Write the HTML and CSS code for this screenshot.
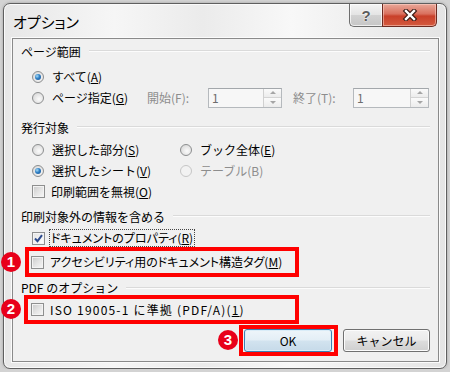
FILE: index.html
```html
<!DOCTYPE html>
<html lang="ja">
<head>
    <meta charset="UTF-8">
    <meta name="viewport" content="width=device-width, initial-scale=1.0">
    <title>オプション</title>
    <link rel="stylesheet" href="styles.css">
</head>
<body>
    <div class="window">
        <div class="titlebar">
            <span class="title">オプション</span>
            <div class="caption-buttons">
                <div class="cap-btn help-btn">?</div>
                <div class="cap-btn close-btn">
                    <svg width="16" height="12" viewBox="0 0 16 12">
                        <path d="M4 2 L12 10 M12 2 L4 10" stroke="#3b1c16" stroke-width="4.6" stroke-linecap="square"/>
                        <path d="M4 2 L12 10 M12 2 L4 10" stroke="#ffffff" stroke-width="2.4" stroke-linecap="square"/>
                    </svg>
                </div>
            </div>
        </div>

        <div class="content">
            <!-- ページ範囲 -->
            <div class="group-head head-page"><span>ページ範囲</span></div>
            <div class="row row-first">
                <span class="radio checked"></span>
                <span class="label">すべて(<u>A</u>)</span>
            </div>
            <div class="row">
                <div class="col-page">
                    <span class="radio"></span>
                    <span class="label">ページ指定(<u>G</u>)</span>
                </div>
                <span class="field-label start-label">開始(F):</span>
                <div class="spin spin-start">
                    <span class="spin-value">1</span>
                    <div class="spin-btns">
                        <div class="spin-up"></div>
                        <div class="spin-down"></div>
                    </div>
                </div>
                <span class="field-label end-label">終了(T):</span>
                <div class="spin spin-end">
                    <span class="spin-value">1</span>
                    <div class="spin-btns">
                        <div class="spin-up"></div>
                        <div class="spin-down"></div>
                    </div>
                </div>
            </div>

            <!-- 発行対象 -->
            <div class="group-head head-target"><span>発行対象</span></div>
            <div class="row row-first-tight">
                <div class="col-left">
                    <span class="radio"></span>
                    <span class="label">選択した部分(<u>S</u>)</span>
                </div>
                <span class="radio"></span>
                <span class="label">ブック全体(<u>E</u>)</span>
            </div>
            <div class="row">
                <div class="col-left">
                    <span class="radio checked"></span>
                    <span class="label">選択したシート(<u>V</u>)</span>
                </div>
                <span class="radio disabled"></span>
                <span class="label dim">テーブル(B)</span>
            </div>
            <div class="row">
                <span class="check"></span>
                <span class="label check-label">印刷範囲を無視(<u>O</u>)</span>
            </div>

            <!-- 印刷対象外の情報を含める -->
            <div class="group-head head-info"><span>印刷対象外の情報を含める</span></div>
            <div class="row row-props">
                <span class="check checked">
                    <svg width="11" height="11" viewBox="0 0 11 11">
                        <path d="M2 5.5 L4.5 8.2 L9 2.2" fill="none" stroke="#2c4a8c" stroke-width="2"/>
                    </svg>
                </span>
                <span class="label check-label kana focus">ドキュメントのプロパティ(<u>R</u>)</span>
            </div>
            <div class="highlight hl-tags">
                <span class="badge badge-1">1</span>
                <span class="check"></span>
                <span class="label check-label kana">アクセシビリティ用のドキュメント構造タグ(<u>M</u>)</span>
            </div>

            <!-- PDF のオプション -->
            <div class="group-head head-pdf"><span>PDF のオプション</span></div>
            <div class="highlight hl-iso">
                <span class="badge badge-2">2</span>
                <span class="check"></span>
                <span class="label check-label iso">ISO 19005-1 に準拠 (PDF/A)(<u>1</u>)</span>
            </div>

            <div class="button-row">
                <div class="highlight hl-ok">
                    <span class="badge badge-3">3</span>
                    <div class="btn btn-default">OK</div>
                </div>
                <div class="btn btn-cancel">キャンセル</div>
            </div>
        </div>
    </div>
</body>
</html>
```

FILE: styles.css
```css
* {
    margin: 0;
    padding: 0;
    box-sizing: border-box;
}

body {
    background: #d3d3d3;
    font-family: "Noto Sans CJK JP", "Noto Sans", sans-serif;
    font-size: 12px;
    color: #000;
}

u {
    text-decoration: underline;
    text-underline-offset: 1px;
}

/* window frame */
.window {
    margin: 3px 0 0 3px;
    width: 444px;
    border: 1px solid #5f5f5f;
    border-radius: 7px;
    padding: 0 7px 6px 8px;
    background: linear-gradient(90deg, #e7e7e7 0%, #f6f6f6 25%, #ebebeb 45%, #f8f8f8 65%, #ececec 85%, #e4e4e4 100%);
    box-shadow: inset 0 0 0 1px #fafafa, 0 0 3px rgba(0, 0, 0, 0.25);
}

.titlebar {
    height: 34px;
    display: flex;
    justify-content: space-between;
    align-items: flex-start;
    margin: 0 -7px 0 -8px;
    padding: 0 9px 0 9px;
}

.title {
    margin-top: 8px;
    line-height: 20px;
    font-size: 15px;
    font-feature-settings: "palt";
}

.caption-buttons {
    display: flex;
    height: 23px;
}

.cap-btn {
    height: 23px;
    display: flex;
    justify-content: center;
    align-items: center;
    border: 1px solid #6e6e6e;
    border-top: none;
}

.help-btn {
    width: 33px;
    border-radius: 0 0 0 5px;
    border-right: none;
    background: linear-gradient(#f4f4f4 0%, #e4e4e4 50%, #d2d2d2 51%, #c6c6c6 100%);
    box-shadow: inset 0 0 0 1px rgba(255, 255, 255, 0.7);
    font-family: "Liberation Sans", sans-serif;
    font-weight: bold;
    font-size: 15px;
    color: #5c5c5c;
    text-shadow: 0 0 2px #fff, 0 0 1px #fff;
}

.close-btn {
    width: 55px;
    border-radius: 0 0 5px 0;
    border-color: #6d2a20;
    background: linear-gradient(#e9a899 0%, #d9705e 45%, #c9402a 55%, #d45a3e 100%);
    box-shadow: inset 0 0 0 1px rgba(255, 220, 210, 0.5);
}

/* dialog body */
.content {
    height: 324px;
    border: 1px solid #8a8a8a;
    background: #f0f0f0;
    padding: 2px 8px 5px 8px;
    box-shadow: 0 0 0 1px #fbfbfb;
}

.group-head {
    display: flex;
    align-items: center;
    height: 20px;
}

.group-head::after {
    content: "";
    flex: 1;
    margin-left: 8px;
    border-top: 1px solid #dadada;
    border-bottom: 1px solid #fcfcfc;
}

.head-target {
    margin-top: 9px;
}

.head-info {
    margin-top: 4px;
}

.head-pdf {
    margin-top: 3px;
    height: 15px;
}

.row {
    display: flex;
    align-items: center;
    height: 21px;
    padding-left: 11px;
}

.row-first {
    margin-top: 5px;
}

.row-first-tight {
    margin-top: 2px;
}

.row-props {
    margin-top: 3px;
    height: 18px;
}

.col-page {
    display: flex;
    align-items: center;
    width: 115px;
    flex-shrink: 0;
}

.col-left {
    display: flex;
    align-items: center;
    width: 148px;
    flex-shrink: 0;
}

.label {
    margin-left: 8px;
    white-space: nowrap;
    line-height: 16px;
}

.check-label {
    margin-left: 5px;
    padding: 0 1px;
}

.kana {
    font-feature-settings: "palt";
}

.focus {
    outline: 1px dotted #444;
    outline-offset: 0;
}

.dim,
.field-label {
    color: #8d8d8d;
}

.field-label {
    flex-shrink: 0;
    white-space: nowrap;
}

.start-label {
    width: 61px;
}

.end-label {
    width: 60px;
    margin-left: 11px;
}

/* radio buttons */
.radio {
    width: 12px;
    height: 12px;
    border-radius: 50%;
    border: 1px solid #8c8e8f;
    background: radial-gradient(circle at 60% 60%, #fbfbfb 0%, #e2e2e2 60%, #cfcfcf 100%);
    display: flex;
    justify-content: center;
    align-items: center;
    flex-shrink: 0;
}

.radio.checked::after {
    content: "";
    width: 6px;
    height: 6px;
    border-radius: 50%;
    background: radial-gradient(circle at 35% 35%, #a6dcf7 0%, #2f7fc4 45%, #174f8f 100%);
}

.radio.disabled {
    border-color: #c6c6c6;
    background: #f2f2f2;
}

/* check boxes */
.check {
    width: 13px;
    height: 13px;
    border: 1px solid #8e8f8f;
    background: linear-gradient(135deg, #c9c9c9 0%, #e3e3e3 50%, #f7f7f7 100%);
    box-shadow: inset 0 0 0 1px #f3f3f3;
    flex-shrink: 0;
    display: flex;
    justify-content: center;
    align-items: center;
}

.check.checked {
    background: linear-gradient(135deg, #e2e2e2 0%, #f4f4f4 60%, #ffffff 100%);
}

/* spin boxes */
.spin {
    height: 20px;
    display: flex;
    border: 1px solid #b5b9bd;
    border-top-color: #a3a7ab;
    background: #f7f7f7;
    flex-shrink: 0;
}

.spin-start {
    width: 74px;
}

.spin-end {
    width: 76px;
}

.spin-value {
    flex: 1;
    padding-left: 3px;
    line-height: 18px;
    color: #6d6d6d;
}

.spin-btns {
    width: 18px;
    display: flex;
    flex-direction: column;
    border-left: 1px solid #d0d0d0;
}

.spin-up,
.spin-down {
    flex: 1;
    display: flex;
    justify-content: center;
    align-items: center;
    background: linear-gradient(#fafafa, #ececec);
}

.spin-up {
    border-bottom: 1px solid #d4d4d4;
}

.spin-up::after,
.spin-down::after {
    content: "";
    border-left: 3px solid transparent;
    border-right: 3px solid transparent;
}

.spin-up::after {
    border-bottom: 3px solid #a5a5a5;
}

.spin-down::after {
    border-top: 3px solid #a5a5a5;
}

/* red highlight boxes */
.highlight {
    position: relative;
    display: flex;
    align-items: center;
    border: 4px solid #ff0000;
    margin-left: 4px;
}

.hl-tags {
    width: 274px;
    height: 30px;
    padding-left: 2px;
}

.hl-iso {
    width: 275px;
    height: 29px;
    margin-left: 3px;
    padding-left: 3px;
}

.hl-ok {
    width: 99px;
    height: 31px;
    margin-left: 0;
    padding-left: 1px;
}

.badge {
    position: absolute;
    width: 20px;
    height: 20px;
    border-radius: 50%;
    background: #e8001a;
    color: #fff;
    font-family: "Liberation Sans", sans-serif;
    font-weight: bold;
    font-size: 15px;
    line-height: 20px;
    text-align: center;
}

.badge-1 {
    left: -28px;
    top: 1px;
}

.badge-2 {
    left: -27px;
    top: 0;
}

.badge-3 {
    left: -25px;
    top: 1px;
}

.iso {
    letter-spacing: 1.2px;
}

/* buttons */
.button-row {
    display: flex;
    justify-content: flex-end;
    align-items: center;
    margin-top: 1px;
    height: 31px;
}

.btn {
    height: 23px;
    display: flex;
    justify-content: center;
    align-items: center;
    border: 1px solid #707070;
    border-radius: 3px;
    background: linear-gradient(#f2f2f2 0%, #ebebeb 48%, #dddddd 52%, #cfcfcf 100%);
    box-shadow: inset 0 0 0 1px #fcfcfc;
}

.btn-default {
    width: 88px;
    border-color: #3c7fb1;
    background: linear-gradient(#eef5fa 0%, #e3eef6 48%, #d2e3ef 52%, #c6dae9 100%);
    box-shadow: inset 0 0 0 1px #d9ecf8;
}

.btn-cancel {
    width: 87px;
    margin-left: 5px;
}
```
